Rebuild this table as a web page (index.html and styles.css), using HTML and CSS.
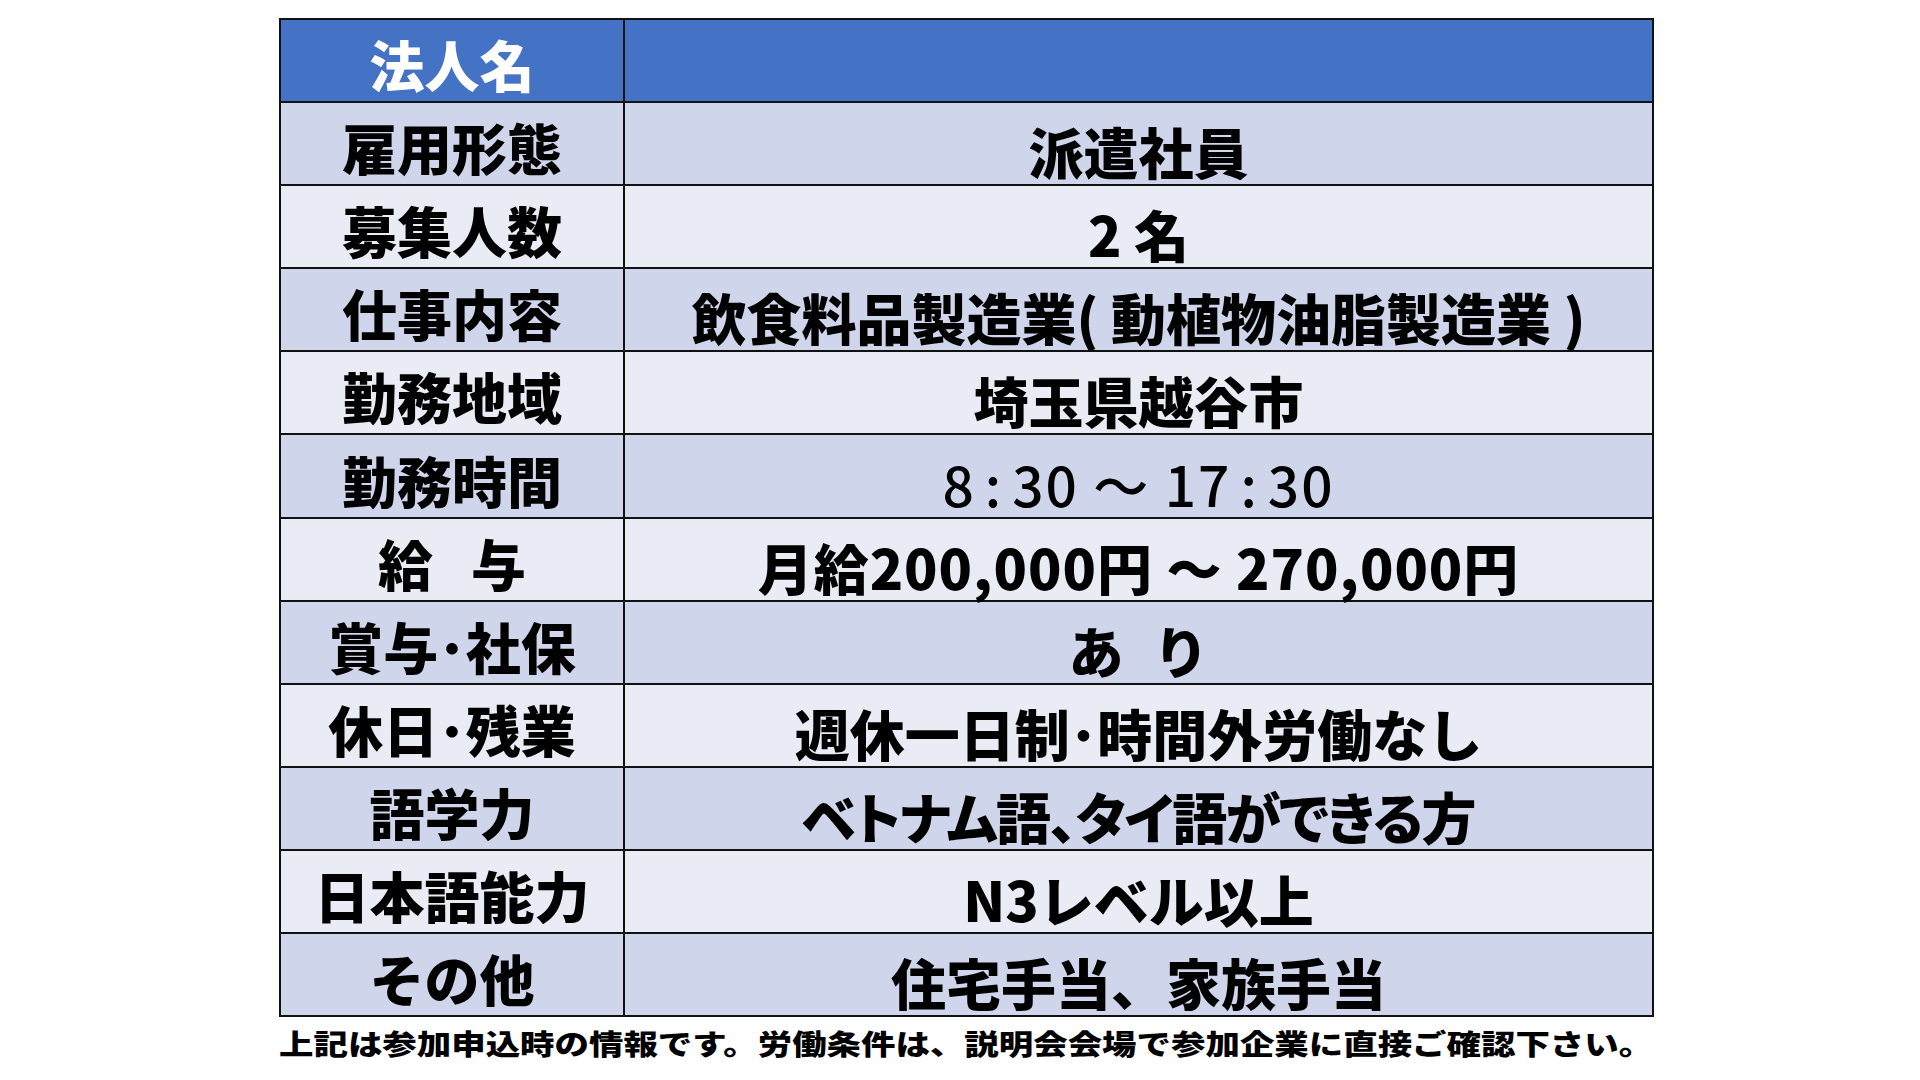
FILE: index.html
```html
<!DOCTYPE html>
<html lang="ja">
<head>
<meta charset="utf-8">
<title>募集要項</title>
<link rel="stylesheet" href="styles.css">
</head>
<body>
<main class="page">
  <table class="info">
    <colgroup><col class="c-label"><col class="c-value"></colgroup>
    <tr class="head"><th>法人名</th><td></td></tr>
    <tr class="dark"><th>雇用形態</th><td>派遣社員</td></tr>
    <tr class="light"><th>募集人数</th><td>2 名</td></tr>
    <tr class="dark"><th>仕事内容</th><td>飲食料品製造業( 動植物油脂製造業 )</td></tr>
    <tr class="light"><th>勤務地域</th><td>埼玉県越谷市</td></tr>
    <tr class="dark"><th>勤務時間</th><td class="time">8<span class="colon">:</span>30 ～ 17<span class="colon">:</span>30</td></tr>
    <tr class="light"><th>給<span class="gap-wide"></span>与</th><td class="pay">月給200,000円 ～ 270,000円</td></tr>
    <tr class="dark"><th>賞与･社保</th><td>あ<span class="gap-narrow"></span>り</td></tr>
    <tr class="light"><th>休日･残業</th><td>週休一日制･時間外労働なし</td></tr>
    <tr class="dark"><th>語学力</th><td class="tight">ベトナム語、タイ語ができる方</td></tr>
    <tr class="light"><th>日本語能力</th><td>N3レベル以上</td></tr>
    <tr class="dark"><th>その他</th><td>住宅手当、家族手当</td></tr>
  </table>
  <p class="note">上記は参加申込時の情報です。労働条件は、説明会会場で参加企業に直接ご確認下さい。</p>
</main>
</body>
</html>
```
FILE: styles.css
```css
html, body {
  margin: 0;
  padding: 0;
  background: #ffffff;
}
body {
  font-family: "Noto Sans CJK JP", "Noto Sans", sans-serif;
  color: #000;
}
.page {
  padding: 18px 0 0 279px;
}
.info {
  border-collapse: collapse;
  width: 1375px;
  border: 2px solid #111;
  table-layout: fixed;
}
.c-label { width: 344px; }
.info tr { height: 83.1px; }
.info th, .info td {
  border: 2px solid #111;
  padding: 0;
  text-align: center;
  vertical-align: middle;
  font-size: 55px;
  font-weight: 900;
  line-height: 1;
  white-space: nowrap;
}
.info th { padding-top: 6px; }
.info td { padding-top: 14px; }
.head { background: #4472c4; color: #fff; }
.dark { background: #cfd5ea; }
.light { background: #e9ebf5; }
.info .time { font-weight: 500; letter-spacing: 2px; }
.colon { padding: 0 9px; }
.info .pay { letter-spacing: 1px; }
.info .tight { font-feature-settings: "palt"; letter-spacing: -1.5px; }
.gap-wide { display: inline-block; width: 38px; }
.gap-narrow { display: inline-block; width: 30px; }
.note {
  display: inline-block;
  margin: 11px 0 0 0;
  font-size: 28px;
  font-weight: 900;
  line-height: 30px;
  white-space: nowrap;
  transform: scaleX(1.23);
  transform-origin: left center;
}
```
